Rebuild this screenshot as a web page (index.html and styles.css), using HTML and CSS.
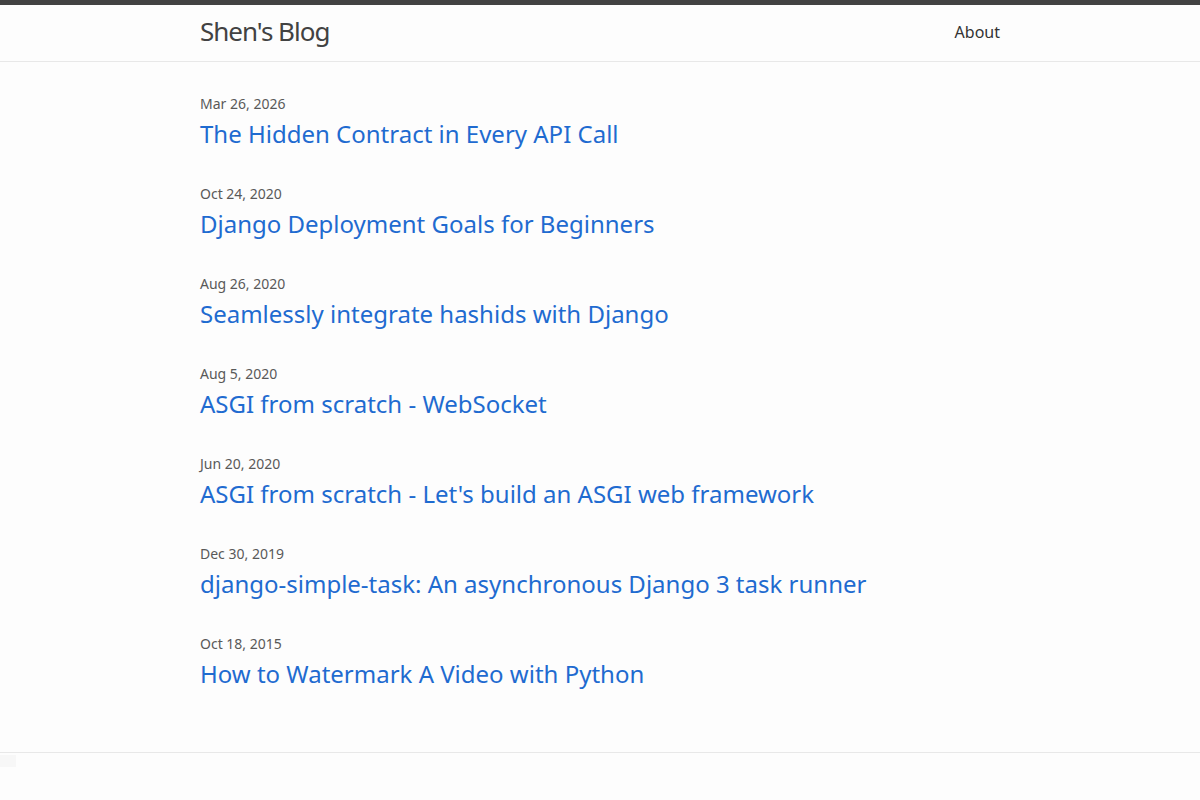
FILE: index.html
```html
<!DOCTYPE html>
<html lang="en">
<head>
<meta charset="utf-8">
<title>Shen's Blog</title>
<link rel="stylesheet" href="styles.css">
</head>
<body>
<header class="site-header">
  <div class="wrapper header-row">
    <a class="site-title" href="#">Shen's Blog</a>
    <nav class="site-nav">
      <a class="page-link" href="#">About</a>
    </nav>
  </div>
</header>

<main class="page-content">
  <div class="wrapper">
    <ul class="post-list">
      <li class="post-item">
        <span class="post-meta">Mar 26, 2026</span>
        <h3 class="post-heading"><a class="post-link" href="#">The Hidden Contract in Every API Call</a></h3>
      </li>
      <li class="post-item">
        <span class="post-meta">Oct 24, 2020</span>
        <h3 class="post-heading"><a class="post-link" href="#">Django Deployment Goals for Beginners</a></h3>
      </li>
      <li class="post-item">
        <span class="post-meta">Aug 26, 2020</span>
        <h3 class="post-heading"><a class="post-link" href="#">Seamlessly integrate hashids with Django</a></h3>
      </li>
      <li class="post-item">
        <span class="post-meta">Aug 5, 2020</span>
        <h3 class="post-heading"><a class="post-link" href="#">ASGI from scratch - WebSocket</a></h3>
      </li>
      <li class="post-item">
        <span class="post-meta">Jun 20, 2020</span>
        <h3 class="post-heading"><a class="post-link" href="#">ASGI from scratch - Let's build an ASGI web framework</a></h3>
      </li>
      <li class="post-item">
        <span class="post-meta">Dec 30, 2019</span>
        <h3 class="post-heading"><a class="post-link" href="#">django-simple-task: An asynchronous Django 3 task runner</a></h3>
      </li>
      <li class="post-item">
        <span class="post-meta">Oct 18, 2015</span>
        <h3 class="post-heading"><a class="post-link" href="#">How to Watermark A Video with Python</a></h3>
      </li>
    </ul>
  </div>
</main>

<footer class="site-footer">
  <div class="footer-mark"></div>
</footer>
</body>
</html>
```

FILE: styles.css
```css
html, body {
  margin: 0;
  padding: 0;
}

body {
  background: #fdfdfd;
  color: #111111;
  font-family: "Noto Sans", "Open Sans", "DejaVu Sans", sans-serif;
  font-size: 16px;
  line-height: 1.5;
}

a {
  text-decoration: none;
}

.wrapper {
  width: 800px;
  margin: 0 auto;
}

/* header bar */
.site-header {
  border-top: 5px solid #424242;
  border-bottom: 1px solid #e8e8e8;
  height: 56px;
}

.header-row {
  display: flex;
  justify-content: space-between;
  align-items: flex-start;
  height: 56px;
}

.site-title {
  font-size: 26px;
  font-weight: 400;
  letter-spacing: -1px;
  color: #424242;
  line-height: 52px;
}

.page-link {
  color: #333333;
  font-size: 16px;
  line-height: 54px;
}

/* post list */
.page-content {
  padding: 31px 0 29px;
}

.post-list {
  list-style: none;
  margin: 0;
  padding: 0;
}

.post-item {
  display: flex;
  flex-direction: column;
  margin-bottom: 30px;
}

.post-meta {
  font-size: 14px;
  line-height: 22px;
  color: #595959;
}

.post-heading {
  margin: 0;
  font-weight: 400;
  font-size: 24px;
  line-height: 38px;
}

.post-link {
  color: #1f6bd0;
}

/* footer */
.site-footer {
  border-top: 1px solid #e8e8e8;
  height: 48px;
  padding-top: 2px;
}

.footer-mark {
  width: 16px;
  height: 12px;
  background: #f7f7f7;
}
```
